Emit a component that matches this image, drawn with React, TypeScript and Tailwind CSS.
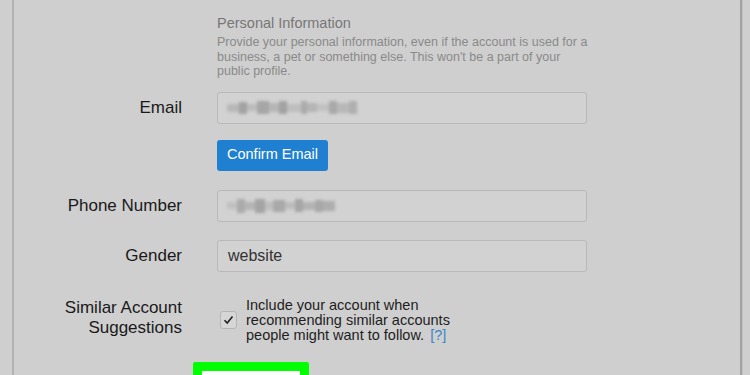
import React from "react";

const font = { fontFamily: '"Liberation Sans", Arial, sans-serif' };

function Blur({ blocks }: { blocks: [number, number, string][] }) {
  return (
    <div className="flex items-center h-full pl-[9px] blur-[1.5px]">
      {blocks.map(([w, h, c], i) => (
        <div key={i} style={{ width: w, height: h, background: c }} />
      ))}
    </div>
  );
}

export default function App() {
  return (
    <div className="w-[750px] h-[375px] overflow-hidden bg-[#cfcfcf] text-[#1a1a1a] flex" style={font}>
      <div className="w-[12px] shrink-0" />
      <div className="w-[2px] shrink-0 bg-[#b2b2b2]" />
      <div className="w-[726px] shrink-0 h-[375px] pt-[15px]">
        <div className="grid grid-cols-[168px_370px] gap-x-[35px]">
          <div />
          <div>
            <div className="text-[14.5px] leading-[17px] text-[#777]">Personal Information</div>
            <div className="mt-[3px] text-[12.5px] leading-[14.5px] text-[#8a8a8a] w-[375px]">
              Provide your personal information, even if the account is used for a business, a pet or something else. This won't be a part of your public profile.
            </div>
          </div>

          <div className="mt-[13px] h-[32px] flex items-center justify-end text-[17px]">Email</div>
          <div className="mt-[13px] h-[32px] rounded-[3px] border border-[#b9b9b9] bg-[#d2d2d2]">
            <Blur
              blocks={[
                [12, 8, "#b8b8b8"],
                [8, 12, "#a2a2a2"],
                [10, 7, "#bcbcbc"],
                [12, 13, "#a6a6a6"],
                [10, 9, "#b6b6b6"],
                [8, 13, "#a2a2a2"],
                [14, 8, "#bebebe"],
                [6, 13, "#ababab"],
                [10, 9, "#b5b5b5"],
                [12, 7, "#c1c1c1"],
                [8, 13, "#a9a9a9"],
                [12, 10, "#b8b8b8"],
                [8, 13, "#afafaf"],
              ]}
            />
          </div>

          <div />
          <div className="mt-[16px]">
            <div className="inline-flex items-center h-[31px] px-[10px] rounded-[3px] bg-[#1f80d2] text-white text-[14.5px]">
              Confirm Email
            </div>
          </div>

          <div className="mt-[19px] h-[32px] flex items-center justify-end text-[17px]">Phone Number</div>
          <div className="mt-[19px] h-[32px] rounded-[3px] border border-[#b9b9b9] bg-[#d2d2d2]">
            <Blur
              blocks={[
                [10, 7, "#c0c0c0"],
                [8, 14, "#ababab"],
                [10, 8, "#b5b5b5"],
                [10, 14, "#a4a4a4"],
                [8, 8, "#bebebe"],
                [12, 12, "#a9a9a9"],
                [10, 7, "#bcbcbc"],
                [8, 13, "#a6a6a6"],
                [12, 8, "#b3b3b3"],
                [8, 12, "#a8a8a8"],
                [12, 10, "#aeaeae"],
              ]}
            />
          </div>

          <div className="mt-[18px] h-[32px] flex items-center justify-end text-[17px]">Gender</div>
          <div className="mt-[18px] h-[32px] rounded-[3px] border border-[#b9b9b9] bg-[#d2d2d2] flex items-center pl-[10px] text-[16px] text-[#333]">
            website
          </div>

          <div className="mt-[26px] text-right text-[17px] leading-[20px]">
            Similar Account
            <br />
            Suggestions
          </div>
          <div className="mt-[26px] flex items-center gap-[9px]">
            <div className="w-[17px] h-[18px] ml-[3px] rounded-[3px] border border-[#b5b5b5] bg-[#d6d6d6] flex items-center justify-center">
              <svg width="11" height="10" viewBox="0 0 11 10">
                <path d="M1.5 5.2 L4.2 8 L9.5 1.5" fill="none" stroke="#222" strokeWidth="1.6" />
              </svg>
            </div>
            <div className="text-[14.5px] leading-[15px] text-[#1e1e1e] w-[240px]">
              <div>Include your account when</div>
              <div>recommending similar accounts</div>
              <div>
                people might want to follow.<span className="ml-[6px] text-[#3d86c8]">[?]</span>
              </div>
            </div>
          </div>

          <div />
          <div className="mt-[19px] ml-[-24px] w-[116px] h-[40px] border-[9px] border-[#00ff00] rounded-[2px] bg-white" />
        </div>
      </div>
      <div className="w-[2px] shrink-0 bg-[#a2a2a2]" />
      <div className="w-[1px] shrink-0 bg-[#c2c2c2]" />
    </div>
  );
}
